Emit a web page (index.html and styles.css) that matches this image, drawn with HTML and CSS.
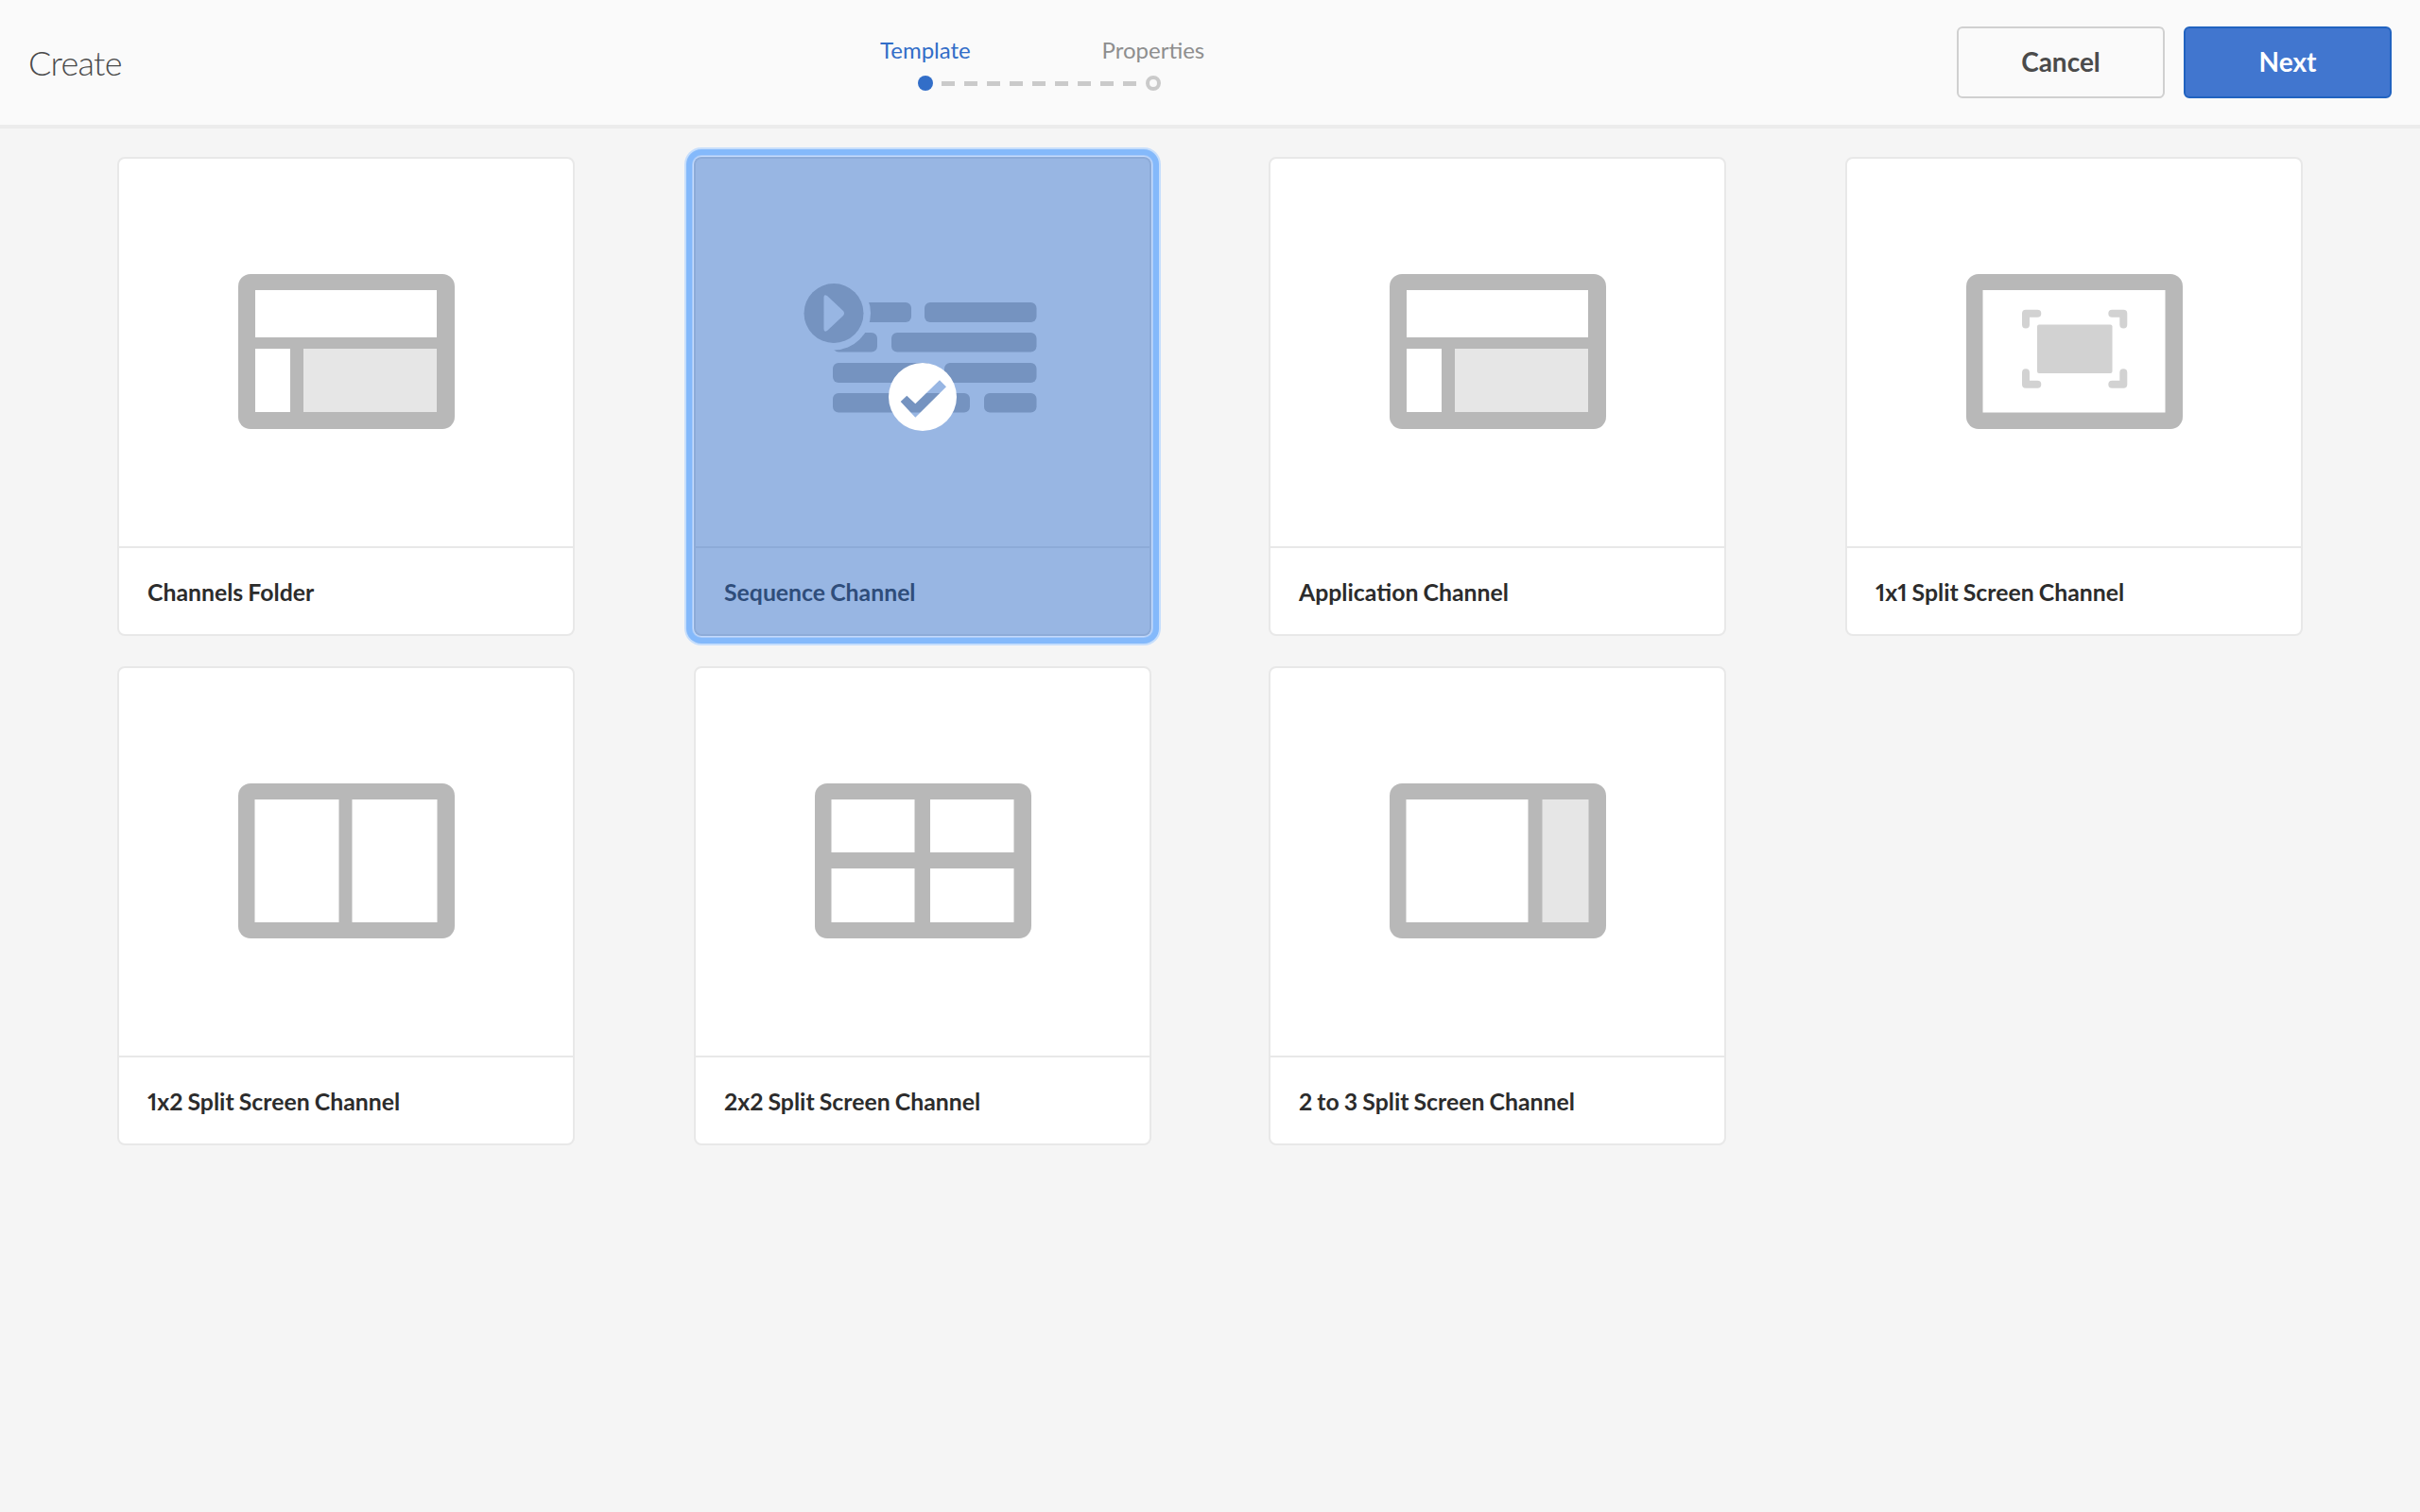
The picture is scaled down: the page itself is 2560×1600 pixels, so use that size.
FILE: index.html
```html
<!doctype html>
<html>
  <head>
    <meta charset="utf-8">
    <title>Create</title>
    <link rel="stylesheet" href="styles.css">
  </head>
  <body>
    <header class="topbar">
      <h1 class="title">Create</h1>

      <div class="stepper">
        <span class="step-label step-first current">Template</span>
        <span class="step-label step-last">Properties</span>
        <span class="dashes"></span>
        <span class="dot dot-first"></span>
        <span class="dot dot-last"></span>
      </div>

      <div class="actions">
        <button class="btn btn-cancel">Cancel</button>
        <button class="btn btn-next">Next</button>
      </div>
    </header>

    <main class="cards">

      <div class="card">
        <div class="thumb">
          <svg class="icon" viewBox="0 0 229 164">
            <rect class="frame" width="229" height="164" rx="13"/>
            <rect class="pane" x="18" y="17" width="192" height="50"/>
            <rect class="pane" x="18" y="79" width="37" height="67"/>
            <rect class="pane-grey" x="69" y="79" width="141" height="67"/>
          </svg>
        </div>
        <div class="label">Channels Folder</div>
      </div>

      <div class="card selected">
        <div class="thumb">
          <svg class="icon-seq" viewBox="0 0 229 122">
            <defs>
              <mask id="play-cut">
                <rect x="-5" y="-5" width="240" height="130" fill="#fff"/>
                <circle cx="1" cy="11.5" r="39" fill="#000"/>
              </mask>
            </defs>
            <g class="bars" mask="url(#play-cut)">
              <rect x="0" y="0" width="83" height="21" rx="6"/>
              <rect x="97" y="0" width="118.500" height="21" rx="6"/>
              <rect x="0" y="32" width="47" height="20.500" rx="6"/>
              <rect x="62" y="32" width="153.500" height="20.500" rx="6"/>
              <rect x="0" y="64" width="104" height="21" rx="6"/>
              <rect x="118" y="64" width="97.500" height="21" rx="6"/>
              <rect x="0" y="96" width="145" height="20.500" rx="6"/>
              <rect x="160" y="96" width="55.500" height="20.500" rx="6"/>
            </g>
            <circle class="frame" cx="1" cy="11.500" r="31.500"/>
            <path class="pane" d="M-9.500 -5.500 Q-9.500 -9 -6 -7 L11 9 Q13 11.500 11 14 L-6 30 Q-9.500 32 -9.500 28 Z"/>
          </svg>
        </div>
        <div class="label">Sequence Channel</div>
        <svg class="check" viewBox="0 0 72 72">
          <path fill-rule="evenodd" d="M36 0a36 36 0 1 0 0 72a36 36 0 1 0 0-72Z M12.700 41 L19.300 34.700 L28.300 43.300 L54 18.300 L61 25.300 L28.300 57.700 Z"/>
        </svg>
      </div>

      <div class="card">
        <div class="thumb">
          <svg class="icon" viewBox="0 0 229 164">
            <rect class="frame" width="229" height="164" rx="13"/>
            <rect class="pane" x="18" y="17" width="192" height="50"/>
            <rect class="pane" x="18" y="79" width="37" height="67"/>
            <rect class="pane-grey" x="69" y="79" width="141" height="67"/>
          </svg>
        </div>
        <div class="label">Application Channel</div>
      </div>

      <div class="card">
        <div class="thumb">
          <svg class="icon" viewBox="0 0 229 164">
            <rect class="frame" width="229" height="164" rx="13"/>
            <rect class="pane" x="17.500" y="17" width="193" height="129.500"/>
            <rect class="mark" x="75" y="53.500" width="79.500" height="51.500" rx="2"/>
            <g class="corners">
              <path d="M63 53.500V41.700H75.300"/>
              <path d="M154.300 41.700H166.300V53.500"/>
              <path d="M63 104.300V116.700H75.300"/>
              <path d="M154.300 116.700H166.300V104.300"/>
            </g>
          </svg>
        </div>
        <div class="label">1x1 Split Screen Channel</div>
      </div>

      <div class="card">
        <div class="thumb">
          <svg class="icon" viewBox="0 0 229 164">
            <rect class="frame" width="229" height="164" rx="13"/>
            <rect class="pane" x="17.500" y="17" width="89" height="130"/>
            <rect class="pane" x="120.500" y="17" width="90" height="130"/>
          </svg>
        </div>
        <div class="label">1x2 Split Screen Channel</div>
      </div>

      <div class="card">
        <div class="thumb">
          <svg class="icon" viewBox="0 0 229 164">
            <rect class="frame" width="229" height="164" rx="13"/>
            <rect class="pane" x="17.500" y="17" width="88" height="56"/>
            <rect class="pane" x="122" y="17" width="88.500" height="56"/>
            <rect class="pane" x="17.500" y="90" width="88" height="57"/>
            <rect class="pane" x="122" y="90" width="88.500" height="57"/>
          </svg>
        </div>
        <div class="label">2x2 Split Screen Channel</div>
      </div>

      <div class="card">
        <div class="thumb">
          <svg class="icon" viewBox="0 0 229 164">
            <rect class="frame" width="229" height="164" rx="13"/>
            <rect class="pane" x="17.500" y="17" width="129" height="130"/>
            <rect class="pane-grey" x="161.500" y="17" width="49" height="130"/>
          </svg>
        </div>
        <div class="label">2 to 3 Split Screen Channel</div>
      </div>

    </main>
  </body>
</html>
```

FILE: styles.css
```css
html, body {
  height: 100%;
}
body {
  margin: 0;
  background-color: #f5f5f5;
  font-family: Lato, "Open Sans", sans-serif;
  color: #2c2c2c;
}

/* top bar */
.topbar {
  box-sizing: border-box;
  height: 136px;
  padding: 0 30px;
  display: flex;
  align-items: center;
  justify-content: space-between;
  background-color: #fafafa;
  border-bottom: 4px solid #ececec;
}
.title {
  margin: 0;
  font-size: 36px;
  font-weight: 300;
  letter-spacing: -0.7px;
  color: #4b4b4b;
}
.stepper {
  display: grid;
  grid-template-columns: 120px 121px 120px;
  grid-template-rows: 30px 16px;
  row-gap: 14px;
  align-items: center;
  justify-items: center;
}
.step-label {
  margin-top: 2px;
  font-size: 24px;
  color: #8e8e8e;
  white-space: nowrap;
  grid-row: 1;
}
.step-label.current {
  color: #326ec8;
}
.step-first {
  grid-column: 1;
}
.step-last {
  grid-column: 3;
}
.dashes {
  grid-row: 2;
  grid-column: 1 / 4;
  width: 206px;
  height: 5px;
  background: repeating-linear-gradient(to right, #cacaca 0, #cacaca 14px, transparent 14px, transparent 24px);
}
.dot {
  grid-row: 2;
  box-sizing: border-box;
  width: 16px;
  height: 16px;
  border-radius: 50%;
}
.dot-first {
  grid-column: 1;
  background-color: #326ec8;
}
.dot-last {
  grid-column: 3;
  border: 4px solid #cacaca;
}
.actions {
  display: flex;
  gap: 20px;
}
.btn {
  box-sizing: border-box;
  width: 220px;
  height: 76px;
  padding: 0 0 3px 0;
  border-radius: 6px;
  font-family: Lato, "Open Sans", sans-serif;
  font-size: 28px;
  font-weight: 700;
}
.btn-cancel {
  background-color: #fafafa;
  border: 2px solid #d0d0d0;
  color: #4b4b4b;
}
.btn-next {
  background-color: #4176cf;
  border: 2px solid #2163c0;
  color: #fff;
}

/* cards */
.cards {
  box-sizing: border-box;
  padding: 30px 0 0 124px;
  display: grid;
  grid-template-columns: 610px 608px 610px 484px;
  row-gap: 32px;
}
.card {
  position: relative;
  box-sizing: border-box;
  width: 484px;
  height: 507px;
  background-color: #fff;
  border: 2px solid #e8e8e8;
  border-radius: 8px;
  display: flex;
  flex-direction: column;
}
.thumb {
  height: 410px;
  display: flex;
  align-items: center;
  justify-content: center;
  border-bottom: 2px solid #e8e8e8;
}
.label {
  flex: 1;
  display: flex;
  align-items: center;
  padding: 2px 0 0 30px;
  font-size: 24.800px;
  font-weight: 700;
  font-variant-numeric: proportional-nums;
  word-spacing: -0.9px;
}

/* selected state is a tint laid over the whole card */
.selected {
  box-shadow: 0 0 0 1px #c4dafc, 0 0 0 2px #a9cbfa, 0 0 0 8px #84b9fb, 0 0 0 10px #c6defc;
}
.selected::after {
  content: "";
  position: absolute;
  top: -2px;
  right: -2px;
  bottom: -2px;
  left: -2px;
  border-radius: 8px;
  background-color: rgba(50, 110, 200, 0.5);
}
.check {
  position: absolute;
  z-index: 1;
  top: 50%;
  left: 50%;
  width: 72px;
  height: 72px;
  margin: -36px 0 0 -36px;
  fill: #fff;
}

/* icons */
.icon {
  display: block;
  width: 229px;
  height: 164px;
  margin-top: -2px;
}
.icon-seq {
  display: block;
  width: 229px;
  height: 122px;
  overflow: visible;
  margin-left: 38px;
  margin-top: 15px;
}
.frame {
  fill: #b8b8b8;
}
.pane {
  fill: #fff;
}
.pane-grey {
  fill: #e6e6e6;
}
.mark {
  fill: #d2d2d2;
}
.corners {
  fill: none;
  stroke: #d2d2d2;
  stroke-width: 8;
  stroke-linecap: round;
  stroke-linejoin: round;
}
.bars {
  fill: #b8b8b8;
}
```
